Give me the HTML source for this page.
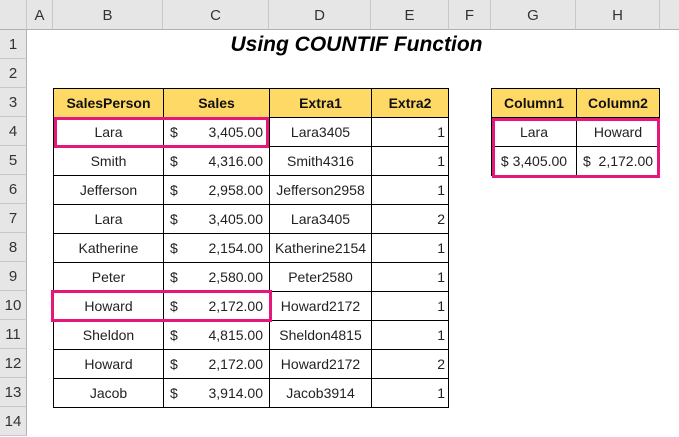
<!DOCTYPE html><html><head><style>
body{margin:0;width:679px;height:423px;overflow:hidden;background:#fff;font-family:"Liberation Sans",sans-serif;position:relative}
div{position:absolute;box-sizing:border-box}
.ch{top:0;height:30px;background:#e6e6e6;border-right:1px solid #c8c8c8;border-bottom:1px solid #b0b0b0;text-align:center;line-height:32px;font-size:15px;color:#333}
.rh{left:0;width:27px;height:29px;background:#e6e6e6;border-bottom:1px solid #c8c8c8;border-right:1px solid #b0b0b0;text-align:center;line-height:30px;font-size:15px;color:#333}
.c{height:30px;border:1px solid #000;line-height:29px;font-size:14px;color:#222;white-space:nowrap}
.h{background:#ffd966;font-weight:bold;text-align:center;color:#111}
.pk{border:3px solid #e6177a}
</style></head><body>
<div class="ch" style="left:0;width:27px"></div>
<div class="ch" style="left:27px;width:26px">A</div>
<div class="ch" style="left:53px;width:110px">B</div>
<div class="ch" style="left:163px;width:106px">C</div>
<div class="ch" style="left:269px;width:102px">D</div>
<div class="ch" style="left:371px;width:78px">E</div>
<div class="ch" style="left:449px;width:42px">F</div>
<div class="ch" style="left:491px;width:85px">G</div>
<div class="ch" style="left:576px;width:84px">H</div>
<div class="ch" style="left:660px;width:19px;border-right:none"></div>
<div class="rh" style="top:30px">1</div><div class="rh" style="top:59px">2</div><div class="rh" style="top:88px">3</div><div class="rh" style="top:117px">4</div><div class="rh" style="top:146px">5</div><div class="rh" style="top:175px">6</div><div class="rh" style="top:204px">7</div><div class="rh" style="top:233px">8</div><div class="rh" style="top:262px">9</div><div class="rh" style="top:291px">10</div><div class="rh" style="top:320px">11</div><div class="rh" style="top:349px">12</div><div class="rh" style="top:378px">13</div><div class="rh" style="top:407px">14</div>
<div style="left:53px;width:607px;top:30px;height:29px;text-align:center;font:italic bold 21px 'Liberation Sans',sans-serif;line-height:30px;color:#000">Using COUNTIF Function</div>
<div class="c h" style="left:53px;top:88px;width:111px">SalesPerson</div>
<div class="c h" style="left:163px;top:88px;width:107px">Sales</div>
<div class="c h" style="left:269px;top:88px;width:103px">Extra1</div>
<div class="c h" style="left:371px;top:88px;width:78px">Extra2</div>
<div id="rows"></div>
<script>
var d=[["Lara","3,405.00","Lara3405",1],["Smith","4,316.00","Smith4316",1],["Jefferson","2,958.00","Jefferson2958",1],["Lara","3,405.00","Lara3405",2],["Katherine","2,154.00","Katherine2154",1],["Peter","2,580.00","Peter2580",1],["Howard","2,172.00","Howard2172",1],["Sheldon","4,815.00","Sheldon4815",1],["Howard","2,172.00","Howard2172",2],["Jacob","3,914.00","Jacob3914",1]];
var h="";d.forEach(function(r,i){var t=117+29*i;
h+='<div class="c" style="left:53px;top:'+t+'px;width:111px;text-align:center">'+r[0]+'</div>';
h+='<div class="c" style="left:163px;top:'+t+'px;width:107px;padding:0 6px"><span style="float:left">$</span><span style="float:right">'+r[1]+'</span></div>';
h+='<div class="c" style="left:269px;top:'+t+'px;width:103px;text-align:center">'+r[2]+'</div>';
h+='<div class="c" style="left:371px;top:'+t+'px;width:78px;text-align:right;padding-right:3px">'+r[3]+'</div>';});
document.getElementById("rows").outerHTML=h;
</script>
<div class="c h" style="left:491px;top:88px;width:86px">Column1</div>
<div class="c h" style="left:576px;top:88px;width:84px">Column2</div>
<div class="c" style="left:491px;top:117px;width:86px;text-align:center">Lara</div>
<div class="c" style="left:576px;top:117px;width:84px;text-align:center">Howard</div>
<div class="c" style="left:491px;top:146px;width:86px;text-align:center">$ 3,405.00</div>
<div class="c" style="left:576px;top:146px;width:84px;text-align:center">$&nbsp; 2,172.00</div>
<div class="pk" style="left:54px;top:117px;width:215px;height:31px"></div>
<div class="pk" style="left:51px;top:290px;width:221px;height:32px"></div>
<div class="pk" style="left:492px;top:118px;width:168px;height:60px"></div>
</body></html>
